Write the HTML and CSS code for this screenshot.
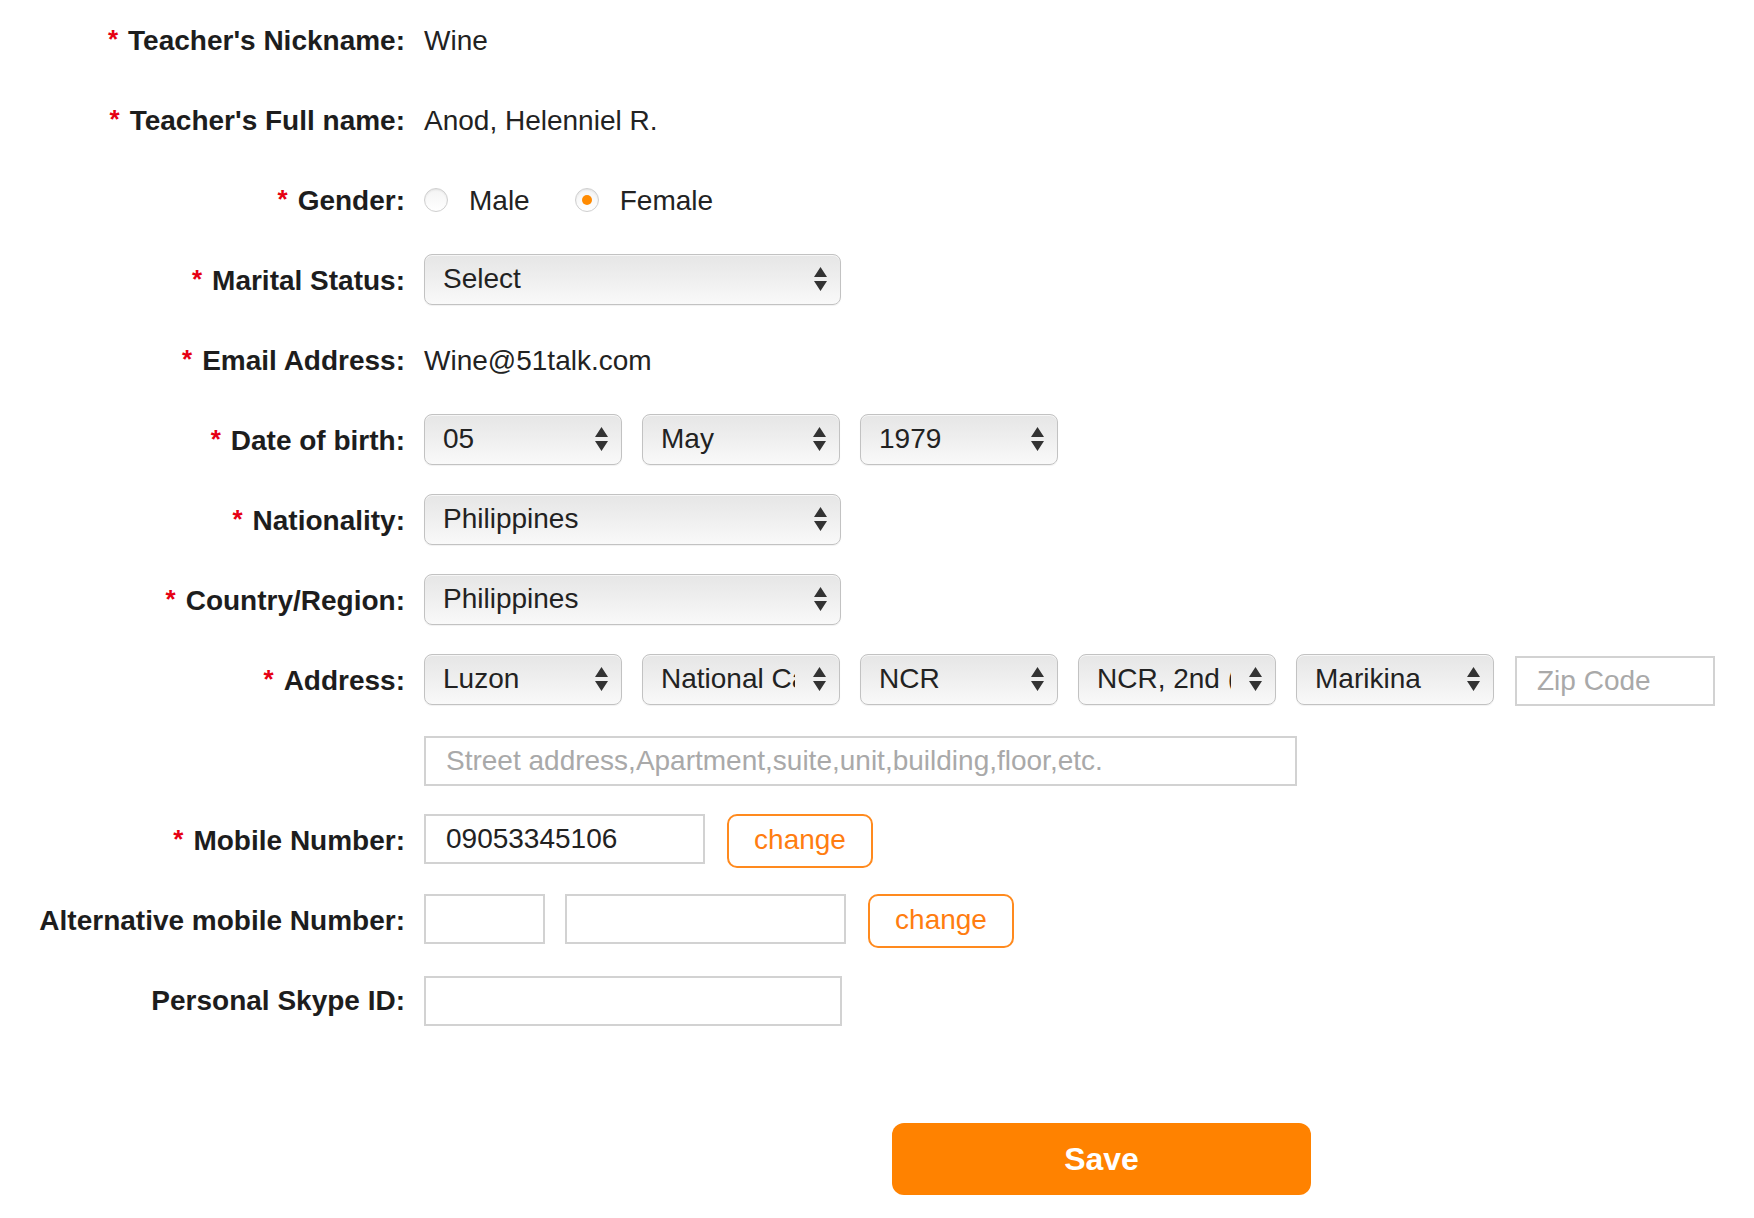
FILE: index.html
```html
<!DOCTYPE html>
<html>
<head>
<meta charset="utf-8">
<title>Teacher Profile</title>
<link rel="stylesheet" href="styles.css">
</head>
<body>
<div class="page">
  <div class="form">
    <div class="lbl"><span class="req">*</span>Teacher's Nickname:</div>
    <div class="val">Wine</div>

    <div class="lbl"><span class="req">*</span>Teacher's Full name:</div>
    <div class="val">Anod, Helenniel R.</div>

    <div class="lbl"><span class="req">*</span>Gender:</div>
    <div class="val">
      <label class="radio"><span class="dot"></span>Male</label>
      <label class="radio"><span class="dot on"></span>Female</label>
    </div>

    <div class="lbl"><span class="req">*</span>Marital Status:</div>
    <div class="val">
      <div class="select wide"><span class="sel-text">Select</span><svg class="arr" width="13" height="24" viewBox="0 0 13 24"><path d="M6.5 0 L13 10 L0 10 Z M0 14 L13 14 L6.5 24 Z" fill="#333"/></svg></div>
    </div>

    <div class="lbl"><span class="req">*</span>Email Address:</div>
    <div class="val">Wine@51talk.com</div>

    <div class="lbl"><span class="req">*</span>Date of birth:</div>
    <div class="val">
      <div class="select"><span class="sel-text">05</span><svg class="arr" width="13" height="24" viewBox="0 0 13 24"><path d="M6.5 0 L13 10 L0 10 Z M0 14 L13 14 L6.5 24 Z" fill="#333"/></svg></div>
      <div class="select"><span class="sel-text">May</span><svg class="arr" width="13" height="24" viewBox="0 0 13 24"><path d="M6.5 0 L13 10 L0 10 Z M0 14 L13 14 L6.5 24 Z" fill="#333"/></svg></div>
      <div class="select"><span class="sel-text">1979</span><svg class="arr" width="13" height="24" viewBox="0 0 13 24"><path d="M6.5 0 L13 10 L0 10 Z M0 14 L13 14 L6.5 24 Z" fill="#333"/></svg></div>
    </div>

    <div class="lbl"><span class="req">*</span>Nationality:</div>
    <div class="val">
      <div class="select wide"><span class="sel-text">Philippines</span><svg class="arr" width="13" height="24" viewBox="0 0 13 24"><path d="M6.5 0 L13 10 L0 10 Z M0 14 L13 14 L6.5 24 Z" fill="#333"/></svg></div>
    </div>

    <div class="lbl"><span class="req">*</span>Country/Region:</div>
    <div class="val">
      <div class="select wide"><span class="sel-text">Philippines</span><svg class="arr" width="13" height="24" viewBox="0 0 13 24"><path d="M6.5 0 L13 10 L0 10 Z M0 14 L13 14 L6.5 24 Z" fill="#333"/></svg></div>
    </div>

    <div class="lbl"><span class="req">*</span>Address:</div>
    <div class="val">
      <div class="select"><span class="sel-text">Luzon</span><svg class="arr" width="13" height="24" viewBox="0 0 13 24"><path d="M6.5 0 L13 10 L0 10 Z M0 14 L13 14 L6.5 24 Z" fill="#333"/></svg></div>
      <div class="select"><span class="sel-text">National Capital Region</span><svg class="arr" width="13" height="24" viewBox="0 0 13 24"><path d="M6.5 0 L13 10 L0 10 Z M0 14 L13 14 L6.5 24 Z" fill="#333"/></svg></div>
      <div class="select"><span class="sel-text">NCR</span><svg class="arr" width="13" height="24" viewBox="0 0 13 24"><path d="M6.5 0 L13 10 L0 10 Z M0 14 L13 14 L6.5 24 Z" fill="#333"/></svg></div>
      <div class="select"><span class="sel-text">NCR, 2nd (District)</span><svg class="arr" width="13" height="24" viewBox="0 0 13 24"><path d="M6.5 0 L13 10 L0 10 Z M0 14 L13 14 L6.5 24 Z" fill="#333"/></svg></div>
      <div class="select"><span class="sel-text">Marikina</span><svg class="arr" width="13" height="24" viewBox="0 0 13 24"><path d="M6.5 0 L13 10 L0 10 Z M0 14 L13 14 L6.5 24 Z" fill="#333"/></svg></div>
      <input class="inp zip" type="text" placeholder="Zip Code">
    </div>

    <div class="lbl"></div>
    <div class="val">
      <input class="inp street" type="text" placeholder="Street address,Apartment,suite,unit,building,floor,etc.">
    </div>

    <div class="lbl"><span class="req">*</span>Mobile Number:</div>
    <div class="val top">
      <input class="inp mobile" type="text" value="09053345106">
      <button class="change">change</button>
    </div>

    <div class="lbl">Alternative mobile Number:</div>
    <div class="val top">
      <input class="inp code" type="text">
      <input class="inp mobile" type="text">
      <button class="change">change</button>
    </div>

    <div class="lbl">Personal Skype ID:</div>
    <div class="val">
      <input class="inp skype" type="text">
    </div>
  </div>

  <div class="actions">
    <button class="save">Save</button>
  </div>
</div>
</body>
</html>
```

FILE: styles.css
```css
html, body {
  margin: 0;
  padding: 0;
  background: #ffffff;
}

body {
  font-family: "Liberation Sans", Arial, Helvetica, sans-serif;
  font-size: 28px;
  color: #222222;
}

.page {
  padding-top: 16px;
}

.form {
  display: grid;
  grid-template-columns: 405px 1fr;
  column-gap: 19px;
  row-gap: 30px;
}

.lbl {
  height: 50px;
  display: flex;
  align-items: center;
  justify-content: flex-end;
  font-weight: bold;
  color: #1d1d1d;
  white-space: nowrap;
}

.req {
  color: #e60012;
  margin-right: 10px;
  font-size: 26px;
  position: relative;
  top: -2px;
}

.val {
  height: 50px;
  display: flex;
  align-items: center;
  gap: 20px;
  white-space: nowrap;
}

.val.top {
  align-items: flex-start;
  gap: 22px;
}

.val.top .inp.code {
  margin-right: -2px;
}

/* radios */
.radio {
  display: flex;
  align-items: center;
  margin-right: 25px;
}

.radio .dot {
  width: 24px;
  height: 24px;
  border-radius: 50%;
  border: 1px solid #cfcfcf;
  background: linear-gradient(#f4f4f4, #ffffff);
  box-shadow: inset 0 1px 2px rgba(0,0,0,0.08);
  margin-right: 21px;
  display: flex;
  align-items: center;
  justify-content: center;
  box-sizing: border-box;
  position: relative;
  top: -1px;
}

.radio .dot.on::after {
  content: "";
  width: 10px;
  height: 10px;
  border-radius: 50%;
  background: #ff8a00;
}

/* selects */
.select {
  box-sizing: border-box;
  width: 198px;
  height: 51px;
  border: 1px solid #c2c2c2;
  border-radius: 8px;
  background: linear-gradient(to bottom, #e6e6e6 0%, #eeeeee 45%, #f9f9f9 100%);
  box-shadow: inset 0 1px 0 #f6f6f6, 0 1px 1px rgba(0,0,0,0.06);
  display: flex;
  align-items: center;
  padding-left: 18px;
  padding-right: 13px;
  color: #222;
  position: relative;
  top: -2px;
}

.select.wide {
  width: 417px;
}

.sel-text {
  flex: 1;
  overflow: hidden;
  white-space: nowrap;
  margin-right: 18px;
}

.arr {
  flex: none;
  display: block;
}

/* inputs */
.inp {
  box-sizing: border-box;
  height: 50px;
  border: 2px solid #d2d2d2;
  background: #fff;
  font-family: "Liberation Sans", Arial, Helvetica, sans-serif;
  font-size: 28px;
  color: #222;
  padding: 0 0 0 20px;
  margin: 0;
  outline: none;
  border-radius: 0;
}

.inp::placeholder {
  color: #a9a9a9;
}

.inp.zip {
  width: 200px;
  margin-left: 1px;
}

.inp.street {
  width: 873px;
}

.inp.mobile {
  width: 281px;
}

.inp.code {
  width: 121px;
}

.inp.skype {
  width: 418px;
}

/* change buttons */
.change {
  box-sizing: border-box;
  width: 146px;
  height: 54px;
  border: 2px solid #ff8a1e;
  border-radius: 10px;
  background: #fff;
  color: #ff7d10;
  font-family: "Liberation Sans", Arial, Helvetica, sans-serif;
  font-size: 28px;
  padding: 0 0 2px 0;
  cursor: pointer;
}

.val.top .inp,
.val.top .change {
  position: relative;
  top: -2px;
}

/* save */
.actions {
  margin-top: 97px;
  padding-left: 892px;
  padding-bottom: 23px;
}

.save {
  width: 419px;
  height: 72px;
  border: none;
  border-radius: 12px;
  background: #ff8200;
  color: #ffffff;
  font-family: "Liberation Sans", Arial, Helvetica, sans-serif;
  font-weight: bold;
  font-size: 32px;
  cursor: pointer;
}
```
